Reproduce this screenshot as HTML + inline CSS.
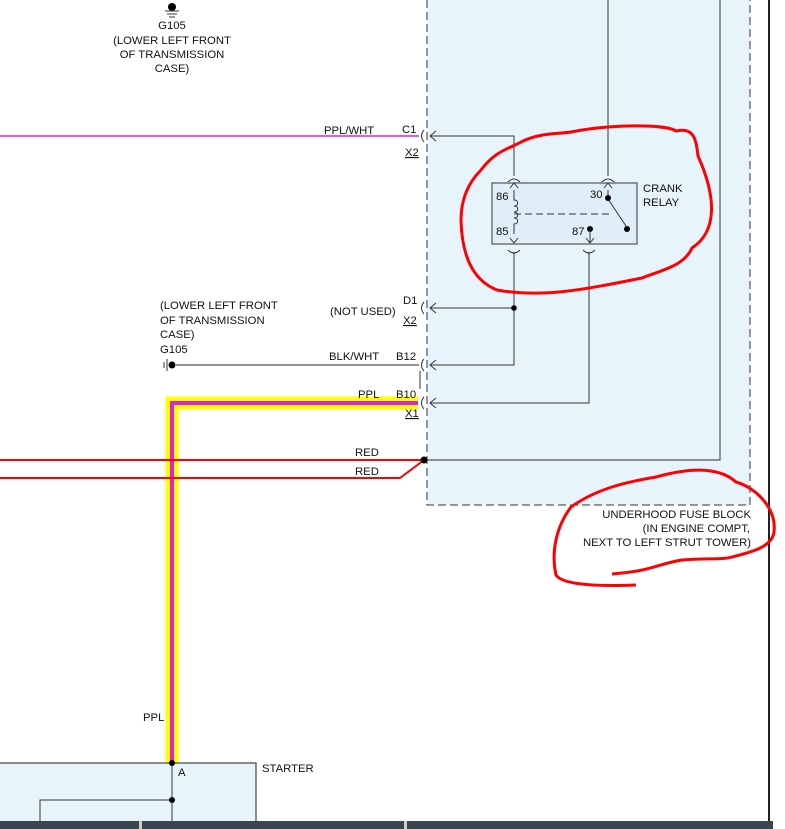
<!DOCTYPE html>
<html><head><meta charset="utf-8"><style>
html,body{margin:0;padding:0;background:#fff;width:785px;height:829px;overflow:hidden}
svg{display:block}
text{font-family:"Liberation Sans",Arial,sans-serif;font-size:11.3px;fill:#111}
</style></head><body>
<svg width="785" height="829" viewBox="0 0 785 829" xmlns="http://www.w3.org/2000/svg">
<rect x="427" y="-5" width="323" height="510" fill="#e8f4fc"/>
<path d="M427 0V505H750V0" fill="none" stroke="#333" stroke-width="1" stroke-dasharray="8,4"/>
<path d="M720 0V460H424" fill="none" stroke="#555" stroke-width="1.2"/>
<line x1="769" y1="0" x2="769" y2="822" stroke="#222" stroke-width="2"/>
<rect x="492" y="183" width="145" height="61" fill="#e0eef8" stroke="#555" stroke-width="1.2"/>
<path d="M514 190v10c5 0 5 6 0 6c5 0 5 6 0 6c5 0 5 6 0 6c5 0 5 6 0 6v10" fill="none" stroke="#333"/>
<path d="M514 214H612" stroke="#333" stroke-dasharray="7,4"/>
<path d="M608 190v9l20 30" fill="none" stroke="#333"/>
<circle cx="608" cy="198" r="3"/><circle cx="627" cy="229" r="3"/><circle cx="590" cy="229" r="3"/>
<path d="M590 229v14M586 238l4 5 4-5M510 188l4-5 4 5M510 238l4 5 4-5M604 188l4-5 4 5" fill="none" stroke="#333"/>
<path d="M508 182q6-6 12 0M508 250q6 6 12 0M583 250q6 6 12 0M602 182q6-6 12 0" fill="none" stroke="#333"/>
<path d="M608 0V176M514 176V136H430M514 252V365H430M514 308H430M589 252V403H430" fill="none" stroke="#333" stroke-width="1"/>
<circle cx="514" cy="308" r="2.8"/>
<path d="M436 131l-6 5 6 5M436 303l-6 5 6 5M436 360l-6 5 6 5M436 398l-6 5 6 5" fill="none" stroke="#333"/>
<path d="M424 130q-5 6 0 12M424 302q-5 6 0 12M424 359q-5 6 0 12M424 397q-5 6 0 12M420 371v18" fill="none" stroke="#333"/>
<line x1="0" y1="136" x2="419" y2="136" stroke="#e020e0" stroke-width="1.5"/>
<line x1="176" y1="365" x2="419" y2="365" stroke="#555" stroke-width="1.2"/>
<circle cx="172" cy="365" r="3.5"/><path d="M164 362v6M167 359v12" stroke="#333"/>
<path d="M172 763V403H418" fill="none" stroke="#ffff00" stroke-width="13"/>
<path d="M172 763V403H418" fill="none" stroke="#e020e0" stroke-width="4"/>
<path d="M0 460H424M0 478H400L424 460" fill="none" stroke="#f00" stroke-width="2"/>
<circle cx="424" cy="460" r="3.5"/>
<circle cx="172" cy="7" r="4"/><path d="M165 11h14M167 14h10M169 17h6" stroke="#333"/>
<rect x="-2" y="763" width="258" height="70" fill="#e8f4fc" stroke="#444" stroke-width="1.2"/>
<path d="M172 763V822M40 822V800H172" fill="none" stroke="#333"/>
<circle cx="172" cy="763" r="3"/><circle cx="172" cy="800" r="3"/>
<rect x="0" y="821" width="785" height="8" fill="#3c4450"/>
<rect x="139" y="821" width="3" height="8" fill="#ccc"/><rect x="404" y="821" width="3" height="8" fill="#ccc"/>
<rect x="773" y="821" width="12" height="8" fill="#fff"/>
<path d="M676 131c18-4 20 8 22 25c18 40 20 75-6 92c-8 18-30 22-50 30c-60 12-100 20-145 12c-25-10-35-35-36-70c0-25 10-40 20-50c15-20 30-22 40-28c20-10 40-8 50-10c40-8 95-8 105-1z" fill="none" stroke="#f00" stroke-width="3"/>
<path d="M612 574c40-3 45-10 70-14c25-2 40 0 50-3c20-5 40-10 42-25c3-25-20-45-38-50c-20-18-55-12-80-5c-30 5-60 12-85 30c-15 20-20 45-15 68c5 8 30 12 80 10" fill="none" stroke="#f00" stroke-width="3"/>
<text x="172" y="29" text-anchor="middle">G105</text>
<text x="172" y="44" text-anchor="middle">(LOWER LEFT FRONT</text>
<text x="172" y="58" text-anchor="middle">OF TRANSMISSION</text>
<text x="172" y="72" text-anchor="middle">CASE)</text>
<text x="324" y="134">PPL/WHT</text>
<text x="402" y="133">C1</text>
<text x="405" y="156" text-decoration="underline">X2</text>
<text x="496" y="200">86</text><text x="496" y="235">85</text>
<text x="590" y="198">30</text><text x="572" y="235">87</text>
<text x="643" y="192">CRANK</text><text x="643" y="206">RELAY</text>
<text x="160" y="309">(LOWER LEFT FRONT</text>
<text x="160" y="324">OF TRANSMISSION</text>
<text x="160" y="338">CASE)</text>
<text x="160" y="353">G105</text>
<text x="330" y="315">(NOT USED)</text>
<text x="403" y="304">D1</text>
<text x="403" y="324" text-decoration="underline">X2</text>
<text x="329" y="360">BLK/WHT</text>
<text x="396" y="360">B12</text>
<text x="358" y="398">PPL</text>
<text x="396" y="398">B10</text>
<text x="405" y="417" text-decoration="underline">X1</text>
<text x="355" y="456">RED</text>
<text x="355" y="475">RED</text>
<text x="751" y="518" text-anchor="end">UNDERHOOD FUSE BLOCK</text>
<text x="750" y="532" text-anchor="end">(IN ENGINE COMPT,</text>
<text x="751" y="546" text-anchor="end">NEXT TO LEFT STRUT TOWER)</text>
<text x="143" y="721">PPL</text>
<text x="178" y="776">A</text>
<text x="262" y="772">STARTER</text>
</svg>
</body></html>
